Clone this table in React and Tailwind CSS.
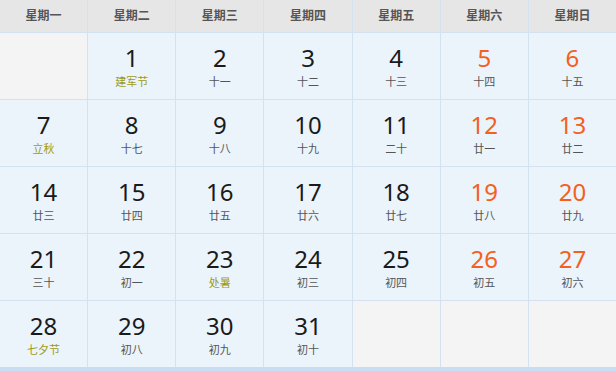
import React from 'react';

const weekNames = ['星期一', '星期二', '星期三', '星期四', '星期五', '星期六', '星期日'];

// day, lunar text, festival?
const days = [
  null,
  [1, '建军节', true],
  [2, '十一'],
  [3, '十二'],
  [4, '十三'],
  [5, '十四'],
  [6, '十五'],
  [7, '立秋', true],
  [8, '十七'],
  [9, '十八'],
  [10, '十九'],
  [11, '二十'],
  [12, '廿一'],
  [13, '廿二'],
  [14, '廿三'],
  [15, '廿四'],
  [16, '廿五'],
  [17, '廿六'],
  [18, '廿七'],
  [19, '廿八'],
  [20, '廿九'],
  [21, '三十'],
  [22, '初一'],
  [23, '处暑', true],
  [24, '初三'],
  [25, '初四'],
  [26, '初五'],
  [27, '初六'],
  [28, '七夕节', true],
  [29, '初八'],
  [30, '初九'],
  [31, '初十'],
  null,
  null,
  null,
];

const font = { fontFamily: '"Noto Sans", "Noto Sans CJK SC", sans-serif' };

export default function App() {
  return (
    <div className="w-[616px] h-[371px] bg-white" style={font}>
      <div className="grid grid-cols-7 gap-px bg-[#d3e1f1] border-b-4 border-[#c8dcf3]">
        {weekNames.map((w) => (
          <div key={w} className="h-[32px] bg-[#e6e6e6] flex items-center justify-center text-[12px] font-bold text-[#555]">
            {w}
          </div>
        ))}
        {days.map((d, i) => {
          if (!d) return <div key={i} className="h-[66px] bg-[#f4f4f4]" />;
          const [n, lunar, fest] = d;
          const weekend = i % 7 >= 5;
          return (
            <div key={i} className="h-[66px] bg-[#ebf3fb] flex flex-col items-center pt-[10px]">
              <div className={`text-[24px] leading-[30px] ${weekend ? 'text-[#f4601e]' : 'text-[#1a1a1a]'}`}>{n}</div>
              <div className={`mt-px text-[11px] leading-[16px] ${fest ? 'text-[#9c9c14]' : 'text-[#555]'}`}>{lunar}</div>
            </div>
          );
        })}
      </div>
    </div>
  );
}
